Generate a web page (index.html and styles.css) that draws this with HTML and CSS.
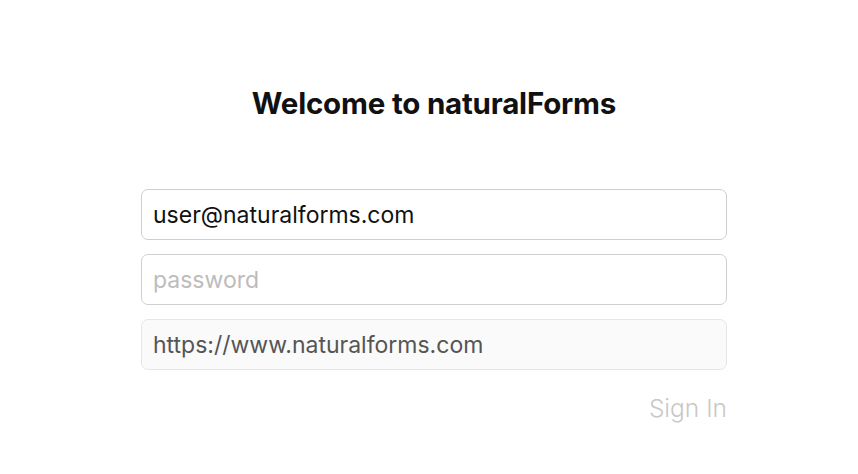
FILE: index.html
```html
<!DOCTYPE html>
<html lang="en">

<head>
    <meta charset="UTF-8">
    <meta name="viewport" content="width=device-width, initial-scale=1.0">
    <title>naturalForms Sign In</title>
    <link rel="stylesheet" href="styles.css">
</head>

<body>
    <div class="page">
        <div class="login">
            <h1>Welcome to naturalForms</h1>

            <form class="fields">
                <input type="email" class="field" value="user@naturalforms.com">
                <input type="password" class="field" placeholder="password">
                <input type="url" class="field field-disabled" value="https://www.naturalforms.com" disabled>
                <div class="actions">
                    <button type="button" class="sign-in" disabled>Sign In</button>
                </div>
            </form>
        </div>
    </div>
</body>

</html>
```

FILE: styles.css
```css
body {
    margin: 0;
    font-family: Inter, "Liberation Sans", sans-serif;
    background-color: #fff;
    color: #111;
}

.page {
    padding-left: 10px;
}

.login {
    width: 586px;
    margin: 0 auto;
    padding-top: 84px;
}

h1 {
    margin: 0 0 67px;
    text-align: center;
    font-size: 29.5px;
    font-weight: 700;
    line-height: 38px;
    letter-spacing: -0.2px;
}

.fields {
    display: flex;
    flex-direction: column;
    gap: 14px;
}

.field {
    box-sizing: border-box;
    height: 51px;
    padding: 0 11px;
    border: 1.5px solid #cfcfcf;
    border-radius: 7px;
    font-family: inherit;
    font-size: 23px;
    color: #111;
    background-color: #fff;
    outline: none;
}

.field::placeholder {
    color: #bcbcbc;
}

.field-disabled {
    background-color: #fafafa;
    border-color: #e6e6e6;
    color: #555;
    -webkit-text-fill-color: #555;
}

.actions {
    display: flex;
    justify-content: flex-end;
    margin-top: 9px;
}

.sign-in {
    padding: 0;
    border: none;
    background: none;
    font-family: inherit;
    font-size: 24.5px;
    font-weight: 300;
    color: #c8c8c8;
}
```
